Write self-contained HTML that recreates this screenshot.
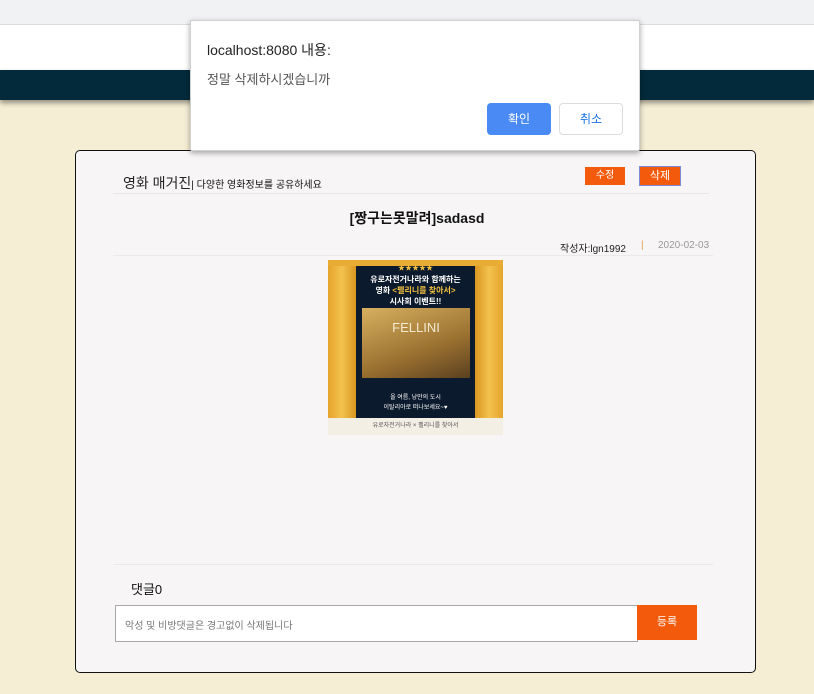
<!DOCTYPE html>
<html><head><meta charset="utf-8"><style>
*{margin:0;padding:0;box-sizing:border-box}
body{width:814px;height:694px;overflow:hidden;background:#f5eed4;font-family:"Liberation Sans","Noto Sans CJK KR",sans-serif;position:relative}
.abs{position:absolute}
</style></head><body>
<div class="abs" style="left:0;top:0;width:814px;height:24px;background:#f1f2f4"></div>
<div class="abs" style="left:0;top:24px;width:814px;height:1px;background:#dcdcdc"></div>
<div class="abs" style="left:0;top:25px;width:814px;height:45px;background:#fff"></div>
<div class="abs" style="left:0;top:70px;width:814px;height:30px;background:#032a3a;box-shadow:0 3px 5px rgba(0,0,0,.4)"></div>

<div class="abs" style="left:75px;top:150px;width:681px;height:523px;background:#f7f5f5;border:1px solid #111;border-radius:5px"></div>
<div class="abs" style="left:123px;top:173px;font-size:14px;color:#222">영화 매거진<span style="font-size:10px;color:#111">| 다양한 영화정보를 공유하세요</span></div>
<div class="abs" style="left:585px;top:167px;width:40px;height:18px;background:#f35a0b;color:#fff;font-size:10px;text-align:center;line-height:18px">수정</div>
<div class="abs" style="left:639px;top:166px;width:42px;height:20px;background:#f35a0b;border:1px solid #7a8bd8;color:#fff;font-size:11px;text-align:center;line-height:18px">삭제</div>
<div class="abs" style="left:113px;top:193px;width:596px;height:1px;background:#e8e6e6"></div>
<div class="abs" style="left:0;top:208px;width:834px;text-align:center;font-size:14px;font-weight:bold;color:#111">[짱구는못말려]sadasd</div>
<div class="abs" style="left:560px;top:240px;font-size:10px;color:#222">작성자:lgn1992</div>
<div class="abs" style="left:641px;top:240px;font-size:10px;color:#e0a050">|</div>
<div class="abs" style="left:658px;top:240px;font-size:10px;color:#999">2020-02-03</div>
<div class="abs" style="left:113px;top:255px;width:600px;height:1px;background:#ebe9e9"></div>

<div class="abs" style="left:328px;top:260px;width:175px;height:175px;background:#0b1a2c;overflow:hidden">
 <div class="abs" style="left:0;top:0;width:28px;height:175px;background:linear-gradient(90deg,#e5a52c,#f3c24e,#d99620)"></div>
 <div class="abs" style="right:0;top:0;width:28px;height:175px;background:linear-gradient(90deg,#d99620,#f3c24e,#e5a52c)"></div>
 <div class="abs" style="left:0;top:0;width:175px;height:6px;background:#e8ac34"></div>
 <div class="abs" style="left:0;top:0;width:175px;text-align:center;top:3px;font-size:7px;color:#f2c040">★★★★★</div>
 <div class="abs" style="left:0;top:14px;width:175px;text-align:center;font-size:8px;font-weight:bold;color:#fff;line-height:11px">유로자전거나라와 함께하는<br>영화 <span style="color:#f2c040">&lt;펠리니를 찾아서&gt;</span><br>시사회 이벤트!!</div>
 <div class="abs" style="left:34px;top:48px;width:108px;height:70px;background:linear-gradient(160deg,#d8b060,#9a7030 60%,#5a4020)"></div>
 <div class="abs" style="left:34px;top:60px;width:108px;text-align:center;font-size:13px;color:#f4ead0">FELLINI</div>
 <div class="abs" style="left:0;top:133px;width:175px;text-align:center;font-size:6px;color:#fff;line-height:10px">올 여름, 낭만의 도시<br>이탈리아로 떠나보세요~♥</div>
 <div class="abs" style="left:0;top:158px;width:175px;height:17px;background:#f4efe4;font-size:6px;color:#555;text-align:center;line-height:17px">유로자전거나라 × 펠리니를 찾아서</div>
</div>

<div class="abs" style="left:113px;top:564px;width:600px;height:1px;background:#ebe9e9"></div>
<div class="abs" style="left:131px;top:579px;font-size:13px;color:#111">댓글0</div>
<div class="abs" style="left:115px;top:605px;width:523px;height:37px;background:#fff;border:1px solid #a8a8a8"></div>
<div class="abs" style="left:125px;top:617px;font-size:10px;color:#777">악성 및 비방댓글은 경고없이 삭제됩니다</div>
<div class="abs" style="left:637px;top:605px;width:60px;height:35px;background:#f35a0b;color:#fff;font-size:11px;text-align:center;line-height:35px">등록</div>

<div class="abs" style="left:190px;top:20px;width:450px;height:131px;background:#fff;border:1px solid #d0d0d0;border-radius:2px;box-shadow:0 2px 6px rgba(0,0,0,.35)"></div>
<div class="abs" style="left:207px;top:40px;font-size:14px;color:#222">localhost:8080 내용:</div>
<div class="abs" style="left:207px;top:69px;font-size:13px;color:#555">정말 삭제하시겠습니까</div>
<div class="abs" style="left:487px;top:103px;width:64px;height:32px;background:#4a8af4;border-radius:4px;color:#fff;font-size:12px;text-align:center;line-height:32px">확인</div>
<div class="abs" style="left:559px;top:103px;width:64px;height:32px;background:#fff;border:1px solid #dadce0;border-radius:4px;color:#1a73e8;font-size:12px;text-align:center;line-height:30px">취소</div>
</body></html>
